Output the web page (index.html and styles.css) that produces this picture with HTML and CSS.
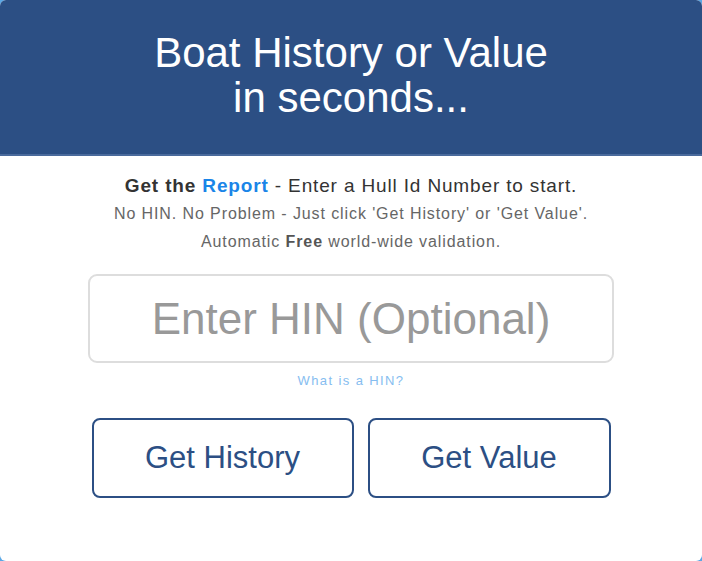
FILE: index.html
```html
<!DOCTYPE html>
<html lang="en">
<head>
    <meta charset="UTF-8">
    <title>Boat History or Value</title>
    <link rel="stylesheet" href="styles.css">
</head>
<body>
<div class="card">
    <div class="head">
        <h1>Boat History or Value<br>in seconds...</h1>
    </div>
    <div class="body">
        <p class="lead"><b>Get the <span class="blue">Report</span></b> - Enter a Hull Id Number to start.</p>
        <p class="note">No HIN. No Problem - Just click 'Get History' or 'Get Value'.</p>
        <p class="note">Automatic <b>Free</b> world-wide validation.</p>
        <input class="hin" type="text" placeholder="Enter HIN (Optional)">
        <a class="what" href="#">What is a HIN?</a>
        <div class="btns">
            <button class="btn btn-history">Get History</button>
            <button class="btn btn-value">Get Value</button>
        </div>
    </div>
</div>
</body>
</html>
```

FILE: styles.css
```css
* {
    padding: 0;
    margin: 0;
    box-sizing: border-box;
}
html, body {
    height: 100%;
}
body {
    background-color: #5aa8e6;
    font-family: "Liberation Sans", Arial, sans-serif;
}
.card {
    height: 561px;
    background-color: #fff;
    border-radius: 6px;
    overflow: hidden;
}
.head {
    height: 156px;
    background-color: #2c4f84;
    border-bottom: 2px solid #4a6a9c;
    padding-top: 30px;
}
.head h1 {
    color: #fff;
    font-weight: normal;
    font-size: 42px;
    line-height: 45px;
    text-align: center;
}
.body {
    display: flex;
    flex-direction: column;
    align-items: center;
    padding-top: 16px;
}
.lead {
    font-size: 19px;
    line-height: 28px;
    letter-spacing: 0.85px;
    color: #333;
}
.blue {
    color: #1a85e8;
}
.note {
    font-size: 16px;
    line-height: 28px;
    letter-spacing: 0.9px;
    color: #666;
}
.note b {
    color: #555;
}
.hin {
    margin-top: 18px;
    width: 526px;
    height: 89px;
    border: 2px solid #ddd;
    border-radius: 9px;
    font-family: "Liberation Sans", Arial, sans-serif;
    font-size: 44px;
    text-align: center;
    outline: none;
}
.hin::placeholder {
    color: #999;
}
.what {
    margin-top: 10px;
    font-size: 13px;
    line-height: 15px;
    letter-spacing: 1.4px;
    color: #86bdf0;
    text-decoration: none;
}
.btns {
    display: flex;
    gap: 14px;
    margin-top: 30px;
}
.btn {
    height: 80px;
    background-color: #fff;
    border: 2px solid #2c4f84;
    border-radius: 8px;
    color: #2c4f84;
    font-family: "Liberation Sans", Arial, sans-serif;
    font-size: 31px;
    cursor: pointer;
}
.btn-history {
    width: 262px;
}
.btn-value {
    width: 243px;
}
```
